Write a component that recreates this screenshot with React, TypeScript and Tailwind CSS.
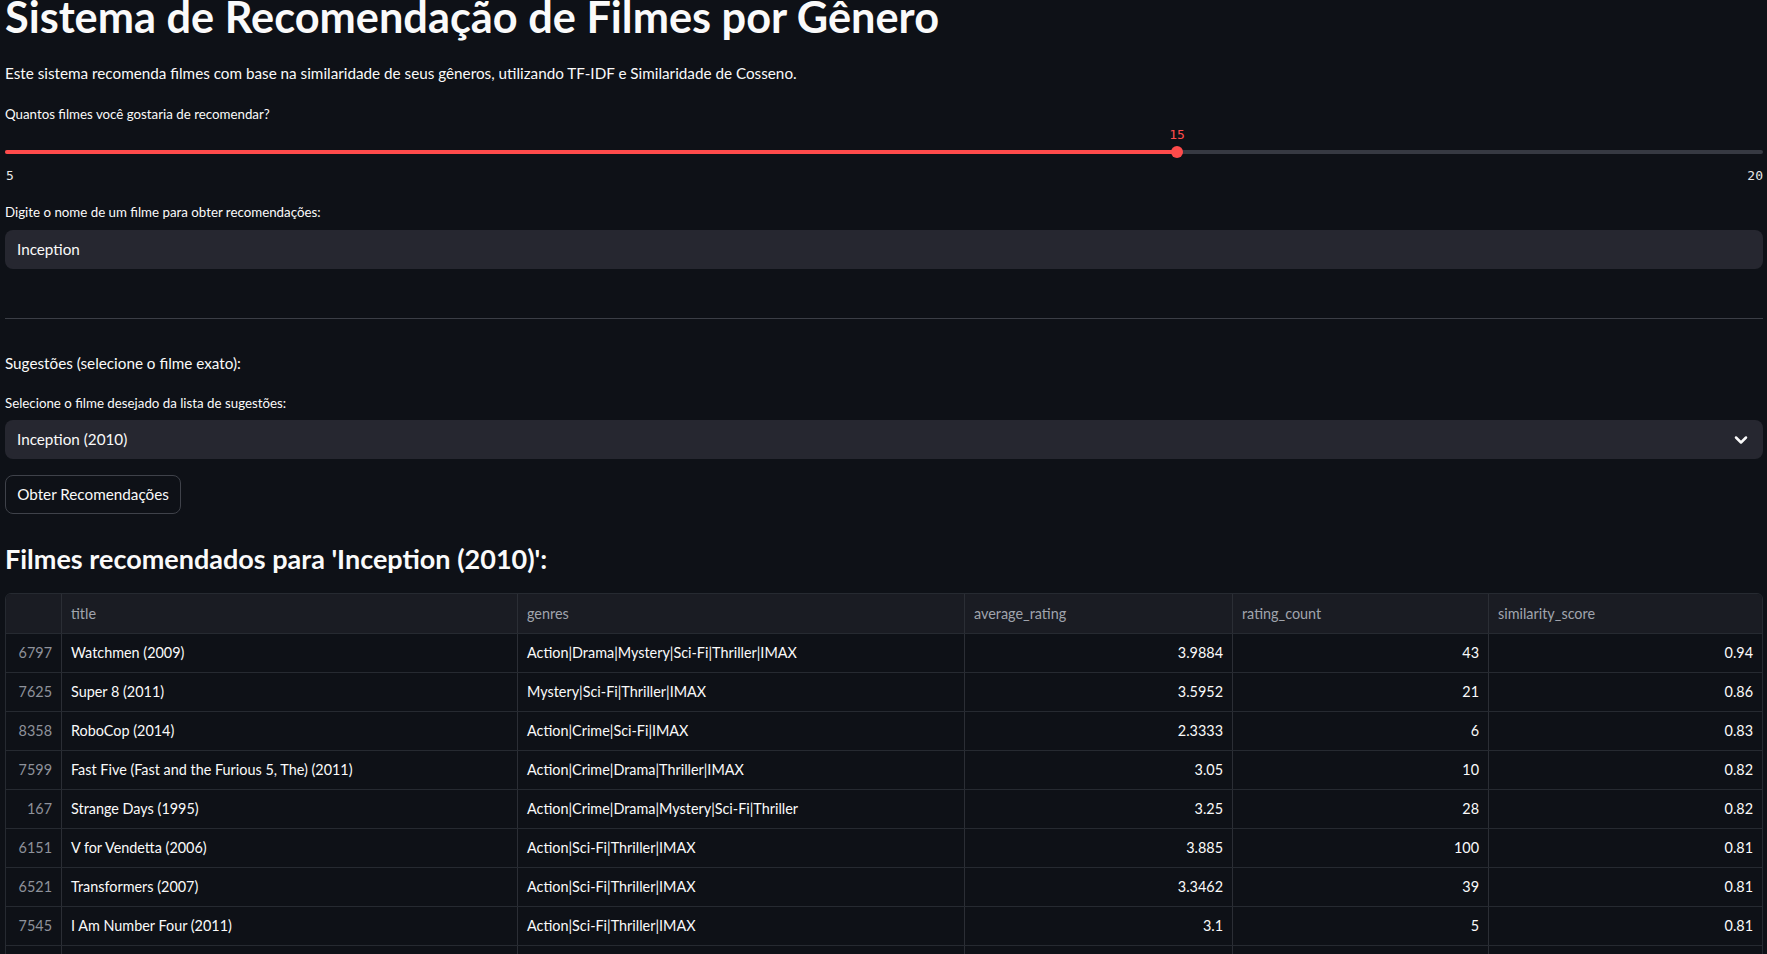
import { ChevronDown } from "lucide-react";

type Row = {
  idx: string;
  title: string;
  genres: string;
  avg: string;
  count: string;
  sim: string;
};

const rows: Row[] = [
  { idx: "6797", title: "Watchmen (2009)", genres: "Action|Drama|Mystery|Sci-Fi|Thriller|IMAX", avg: "3.9884", count: "43", sim: "0.94" },
  { idx: "7625", title: "Super 8 (2011)", genres: "Mystery|Sci-Fi|Thriller|IMAX", avg: "3.5952", count: "21", sim: "0.86" },
  { idx: "8358", title: "RoboCop (2014)", genres: "Action|Crime|Sci-Fi|IMAX", avg: "2.3333", count: "6", sim: "0.83" },
  { idx: "7599", title: "Fast Five (Fast and the Furious 5, The) (2011)", genres: "Action|Crime|Drama|Thriller|IMAX", avg: "3.05", count: "10", sim: "0.82" },
  { idx: "167", title: "Strange Days (1995)", genres: "Action|Crime|Drama|Mystery|Sci-Fi|Thriller", avg: "3.25", count: "28", sim: "0.82" },
  { idx: "6151", title: "V for Vendetta (2006)", genres: "Action|Sci-Fi|Thriller|IMAX", avg: "3.885", count: "100", sim: "0.81" },
  { idx: "6521", title: "Transformers (2007)", genres: "Action|Sci-Fi|Thriller|IMAX", avg: "3.3462", count: "39", sim: "0.81" },
  { idx: "7545", title: "I Am Number Four (2011)", genres: "Action|Sci-Fi|Thriller|IMAX", avg: "3.1", count: "5", sim: "0.81" },
  { idx: "", title: "", genres: "", avg: "", count: "", sim: "" },
];

const cols = "grid grid-cols-[56px_456px_447px_268px_256px_1fr]";

function Slider({ value, min, max }: { value: number; min: number; max: number }) {
  const pct = ((value - min) / (max - min)) * 100;
  return (
    <div>
      <div className="relative h-[42px]">
        {/* track */}
        <div className="absolute left-0 right-0 top-[26px] h-[4px] rounded-full bg-[#363942]" />
        <div
          className="absolute left-0 top-[26px] h-[4px] rounded-full bg-[#ff4b4b]"
          style={{ width: `${pct}%` }}
        />
        {/* thumb + value */}
        <div className="absolute top-0" style={{ left: `${pct}%` }}>
          <div className="absolute left-0 top-[3px] -translate-x-1/2 font-['DejaVu_Sans_Mono',monospace] text-[13px] leading-[16px] text-[#ff4b4b]">
            {value}
          </div>
          <div className="absolute left-0 top-[22px] h-[12px] w-[12px] -translate-x-1/2 rounded-full bg-[#ff4b4b]" />
        </div>
      </div>
      <div className="flex h-[20px] items-center justify-between font-['DejaVu_Sans_Mono',monospace] text-[13px] text-[#e6e6e6]">
        <span className="pl-[1px]">{min}</span>
        <span>{max}</span>
      </div>
    </div>
  );
}

export default function App() {
  return (
    <div className="h-screen w-full overflow-hidden bg-[#0e1117] font-['Lato',sans-serif] text-[#fafafa]">
      <div className="pl-[5px] pr-[4px]">
        <h1 className="-mt-[10px] h-[52px] text-[43.3px] font-bold leading-[52px]">
          Sistema de Recomendação de Filmes por Gênero
        </h1>

        <p className="mt-[19px] text-[15.25px] leading-[24px]">
          Este sistema recomenda filmes com base na similaridade de seus gêneros, utilizando TF-IDF e Similaridade de Cosseno.
        </p>

        <label className="mt-[19px] block text-[13.3px] leading-[20px]">
          Quantos filmes você gostaria de recomendar?
        </label>
        <Slider value={15} min={5} max={20} />

        <label className="mt-[16px] block text-[13.3px] leading-[20px]">
          Digite o nome de um filme para obter recomendações:
        </label>
        <div className="mt-[8px] flex h-[39px] items-center rounded-lg bg-[#262730] px-[12px] text-[15.25px]">
          Inception
        </div>

        <hr className="mt-[49px] border-0 border-t border-[#3b3e46]" />

        <p className="mt-[32px] text-[15.25px] leading-[24px]">Sugestões (selecione o filme exato):</p>

        <label className="mt-[18px] block text-[13.3px] leading-[20px]">
          Selecione o filme desejado da lista de sugestões:
        </label>
        <div className="mt-[7px] flex h-[39px] items-center justify-between rounded-lg bg-[#262730] pl-[12px] pr-[12px] text-[15.25px]">
          <span>Inception (2010)</span>
          <ChevronDown size={20} strokeWidth={3} className="text-[#fafafa]" />
        </div>

        <button className="mt-[16px] flex h-[39px] w-[176px] items-center justify-center rounded-lg border border-[#3f424a] bg-[#0e1117] text-[15.25px]">
          Obter Recomendações
        </button>

        <h3 className="mt-[29px] h-[32px] text-[27px] font-bold leading-[32px]">
          Filmes recomendados para 'Inception (2010)':
        </h3>

        <div className="mt-[18px] overflow-hidden rounded-md border border-[#262a31] text-[14.4px]">
          <div className={`${cols} h-[39px] bg-[#1a1c23] text-[#a0a4ad]`}>
            <div className="border-r border-[#2b2e35]" />
            <div className="flex items-center border-r border-[#2b2e35] px-[9px]">title</div>
            <div className="flex items-center border-r border-[#2b2e35] px-[9px]">genres</div>
            <div className="flex items-center border-r border-[#2b2e35] px-[9px]">average_rating</div>
            <div className="flex items-center border-r border-[#2b2e35] px-[9px]">rating_count</div>
            <div className="flex items-center px-[9px]">similarity_score</div>
          </div>
          {rows.map((r, i) => (
            <div key={i} className={`${cols} h-[39px] border-t border-[#262a31] bg-[#0e1117]`}>
              <div className="flex items-center justify-end border-r border-[#2b2e35] px-[9px] text-[#8e929b]">{r.idx}</div>
              <div className="flex items-center border-r border-[#2b2e35] px-[9px]">{r.title}</div>
              <div className="flex items-center border-r border-[#2b2e35] px-[9px]">{r.genres}</div>
              <div className="flex items-center justify-end border-r border-[#2b2e35] px-[9px]">{r.avg}</div>
              <div className="flex items-center justify-end border-r border-[#2b2e35] px-[9px]">{r.count}</div>
              <div className="flex items-center justify-end px-[9px]">{r.sim}</div>
            </div>
          ))}
        </div>
      </div>
    </div>
  );
}
